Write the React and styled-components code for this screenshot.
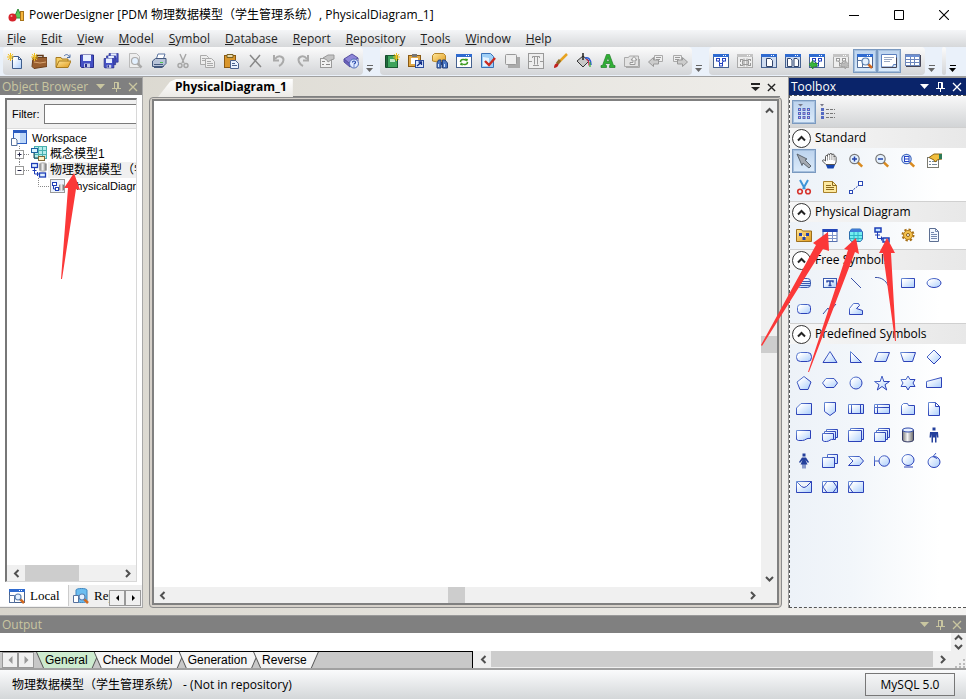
import React from "react";
import styled, { createGlobalStyle, css } from "styled-components";

const UI = '"Open Sans", "Noto Sans CJK SC", sans-serif';
const CLASSIC = '"Liberation Sans", "Noto Sans CJK SC", sans-serif';

const Global = createGlobalStyle`
  * { box-sizing: border-box; }
  body { margin: 0; background: #fff; }
  button, input { font: inherit; color: inherit; margin: 0; padding: 0; }
  button { background: none; border: 0; }
`;

/* ---------- icons ---------- */

const Svg = styled.svg`
  display: block;
  flex: none;
  width: ${(p) => p.$w || 16}px;
  height: ${(p) => p.$h || p.$w || 16}px;
`;

const Hidden = styled.svg`
  position: absolute;
  width: 0;
  height: 0;
`;

const Gradients = () => (
  <Hidden aria-hidden="true">
    <defs>
      <linearGradient id="sky" x1="0" y1="0" x2="1" y2="1">
        <stop offset="0.2" stopColor="#fff" />
        <stop offset="1" stopColor="#a9cdfc" />
      </linearGradient>
      <linearGradient id="ink" x1="0" y1="0" x2="1" y2="1">
        <stop offset="0" stopColor="#6f93d8" />
        <stop offset="0.5" stopColor="#2b41b8" />
      </linearGradient>
      <linearGradient id="gold" x1="0" y1="0" x2="1" y2="1">
        <stop offset="0" stopColor="#ffe79a" />
        <stop offset="1" stopColor="#e09a1c" />
      </linearGradient>
      <linearGradient id="steel" x1="0" x2="1">
        <stop offset="0" stopColor="#777" />
        <stop offset="0.45" stopColor="#f4f4f4" />
        <stop offset="1" stopColor="#666" />
      </linearGradient>
    </defs>
  </Hidden>
);

const Spark = () => (
  <path d="M3.500 0v8M0 4h7M1 1l5 6M6 1L1 7" stroke="#f2c01c" strokeWidth="1" fill="none" />
);
const Lens = ({ x = 7, y = 6, r = 3.5, rim = "#5b7fae", grip = "#d98a1f" }) => (
  <g>
    <path d={`M${x + r * 0.7} ${y + r * 0.7}L${x + r + 3} ${y + r + 3}`} stroke={grip} strokeWidth="2.500" />
    <circle cx={x} cy={y} r={r} fill="#e4f1ff" stroke={rim} strokeWidth="1.200" />
  </g>
);
const Win = ({ c = "#2f6bd0", b = "#46618f", f = "#fff" }) => (
  <g>
    <rect x="0.500" y="1.500" width="15" height="13" fill={f} stroke={b} />
    <path d="M0 1h16v3H0z" fill={c} />
    <path d="M10 2.500h4" stroke="#fff" strokeDasharray="1 1" />
  </g>
);
const Nodes = ({ c = "#2342c0" }) => (
  <g fill="#fff" stroke={c}>
    <path d="M5 7.500l3 4 3-4" fill="none" />
    <rect x="3.500" y="5.500" width="3" height="2.500" />
    <rect x="9.500" y="5.500" width="3" height="2.500" />
    <rect x="6.500" y="10.500" width="3" height="2.500" />
  </g>
);
const Floppy = ({ x = 0, y = 0, s = 1 }) => (
  <g transform={`translate(${x} ${y}) scale(${s})`}>
    <path d="M1.500 2h13v12.500h-12l-1-1z" fill="#4450c4" stroke="#2a2f8c" />
    <path d="M4 2h8v6H4z" fill="#e8f0ff" />
    <path d="M5 10.500h6v4H5z" fill="#c8cfe8" />
    <path d="M6 11h2v3H6z" fill="#2a2f8c" />
  </g>
);

const ICONS = {
  logo: (
    <g>
      <path d="M6 11L10 2l4 9z" fill="#5bc95b" stroke="#2f8a39" />
      <rect x="12.500" y="4.500" width="3" height="9" fill="#f5b63c" stroke="#a8741a" />
      <circle cx="4.500" cy="10.500" r="4" fill="#d6232a" />
      <circle cx="3.500" cy="9" r="1" fill="#f79a9a" />
    </g>
  ),
  newDoc: (
    <g>
      <path d="M5.500 3.500h6l3 3v9h-9z" fill="url(#sky)" stroke="#3f5d8c" />
      <path d="M11.500 3.500v3h3" fill="none" stroke="#3f5d8c" />
      <Spark />
    </g>
  ),
  briefcase: (
    <g>
      <path d="M6 5V2.500h6V5" fill="none" stroke="#5f3818" strokeWidth="1.500" />
      <path d="M2 4.500l14 0v9l-13 2-2-2z" fill="#9a5f30" stroke="#6b3e1a" />
      <path d="M3 9l6 1 6-1" stroke="#d9a673" fill="none" />
      <Spark />
    </g>
  ),
  open: (
    <g>
      <path d="M1 14V4.500h5l1 1.500h6v2" fill="#f4cd62" stroke="#a87a1e" />
      <path d="M1 14.500L4 8h12l-3 6.500z" fill="url(#gold)" stroke="#a87a1e" />
      <path d="M9 3c2-2 4-2 5.500 1M15 1.500v3h-3" fill="none" stroke="#4e6fa6" />
    </g>
  ),
  save: <Floppy />,
  saveAll: (
    <g>
      <Floppy x={5} y={-1} s={0.7} />
      <Floppy x={2.5} y={1.5} s={0.7} />
      <Floppy x={0} y={4} s={0.75} />
    </g>
  ),
  preview: (
    <g>
      <path d="M2.500.5h7l3 3v11h-10z" fill="#eee" stroke="#bbb" />
      <Lens x={8} y={8} rim="#aaa" grip="#aaa" />
    </g>
  ),
  print: (
    <g>
      <path d="M5 7l2-6h7l-2 6z" fill="#fff" stroke="#5b74a0" />
      <path d="M1.500 8l3-2.500h10.500v5l-3 3H1.500z" fill="#b7c3d8" stroke="#43587e" />
      <path d="M3 11.500h9M3 14.500h8l2-1.500" stroke="#43587e" fill="none" />
      <path d="M9 9.500h3" stroke="#4ec14e" />
    </g>
  ),
  cut: (
    <g fill="none" stroke="#a5a5a5" strokeWidth="1.400">
      <path d="M5 1l4 9M11 1L7 10" />
      <circle cx="5" cy="12.500" r="2" />
      <circle cx="11" cy="12.500" r="2" />
    </g>
  ),
  copy: (
    <g fill="#eee" stroke="#aaa">
      <path d="M1.500 2.500h6l2 2v7h-8z" />
      <path d="M6.500 5.500h6l3 3v6h-9z" />
      <path d="M8 8.500h4M8 10.500h6M8 12.500h6M3 5.500h3M3 7.500h3" />
    </g>
  ),
  paste: (
    <g>
      <rect x="1.500" y="2.500" width="11" height="12" fill="#d9962c" stroke="#8a5a14" />
      <path d="M4 1.500h6v3H4z" fill="#e7d9b0" stroke="#77601f" />
      <path d="M7.500 7.500h5l3 3v5h-8z" fill="#eaf3ff" stroke="#4c628c" />
      <path d="M9 10.500h3M9 12.500h5" stroke="#4c628c" />
    </g>
  ),
  del: <path d="M3 2l11 12M13 2L3 14" stroke="#888" strokeWidth="1.500" fill="none" />,
  undo: (
    <g fill="none" stroke="#aaa" strokeWidth="2">
      <path d="M4 6c4-5 10-2 8 3-1 2-2 3-4 4" />
      <path d="M3 2v5.500h5" />
    </g>
  ),
  redo: (
    <g fill="none" stroke="#aaa" strokeWidth="2">
      <path d="M12 6C8 1 2 4 4 9c1 2 2 3 4 4" />
      <path d="M13 2v5.500H8" />
    </g>
  ),
  props: (
    <g>
      <rect x="1.500" y="5.500" width="11" height="9" fill="#f1f1f1" stroke="#9a9a9a" />
      <path d="M3 8.500h3M3 11.500h2M7 11.500h4" stroke="#888" />
      <path d="M4 5l5-3h6v4l-3 1-3 2-1-2z" fill="#c4c4c4" stroke="#999" />
    </g>
  ),
  help: (
    <g>
      <path d="M1 6l8-5 6 4-8 6z" fill="#8e86d8" stroke="#5750a0" />
      <path d="M1 6v3l6 5V11z" fill="#6a62bd" stroke="#5750a0" />
      <path d="M7 11l8-6v3l-8 6z" fill="#fff" stroke="#5750a0" />
      <circle cx="11" cy="10.500" r="4.500" fill="#dfe9ff" stroke="#4b67b4" />
      <path d="M9.500 9.500c0-2 3-2 3 0 0 1-1.500 1-1.500 2M11 12.500v1" fill="none" stroke="#2344a8" strokeWidth="1.200" />
    </g>
  ),
  newModel: (
    <g>
      <path d="M1.500 2.500h3v12h-3z" fill="#1f6b3a" stroke="#144a28" />
      <rect x="3.500" y="2.500" width="10" height="12" fill="#3ea35b" stroke="#1b5a33" />
      <rect x="6" y="6" width="5" height="3" fill="#bfe8c8" />
      <path d="M12.500 0v8M9 4h7M10 1l5 6M15 1l-5 6" stroke="#f2c01c" />
    </g>
  ),
  pasteShortcut: (
    <g>
      <rect x="0.500" y="2.500" width="12" height="11" fill="#e0a848" stroke="#8a5a14" />
      <path d="M4 1h5v3H4z" fill="#777" />
      <path d="M3 5h7v6H3z" fill="#fff" />
      <rect x="7.500" y="7.500" width="8" height="7" fill="#dbe8ff" stroke="#2b4c9c" />
      <path d="M9 13l4-3.500M10.500 9h3v3" stroke="#112c86" fill="none" strokeWidth="1.300" />
    </g>
  ),
  find: (
    <g>
      <path d="M.5 2.500l2-2h9l2 2v6l-3 1.500-10-2z" fill="url(#gold)" stroke="#b5852a" />
      <path d="M5 15V10l1.500-3h2.500v8zM10.500 15V7H13l2.500 3v5z" fill="#4b78c4" stroke="#24407c" />
      <path d="M9 9h2v3H9z" fill="#24407c" />
      <path d="M6.500 11v3M12.500 11v3" stroke="#cfe2ff" />
    </g>
  ),
  refresh: (
    <g>
      <Win />
      <path d="M4.500 9c0-3 4-3 6-1.500M11.500 9c0 3-4 3-6 1.500" fill="none" stroke="#3c9a1e" strokeWidth="1.500" />
      <path d="M9 5.500l3 .5-1 3zM7 12.500l-3-.5 1-3z" fill="#3c9a1e" />
    </g>
  ),
  check: (
    <g>
      <path d="M1.500.5h9l3 3v11h-12z" fill="#9fd0f7" stroke="#3a72b8" />
      <path d="M3 4l6 1v8H3z" fill="#e3f3ff" />
      <path d="M5 8l4 4 6-7" fill="none" stroke="#c92b20" strokeWidth="2.400" />
    </g>
  ),
  shadow: (
    <g>
      <rect x="4" y="4" width="12" height="11" fill="#aaa" />
      <rect x="1.500" y="1.500" width="11" height="10" rx="1" fill="#eee" stroke="#999" />
    </g>
  ),
  fitText: (
    <g fill="none" stroke="#999">
      <rect x="0.500" y="0.500" width="15" height="15" fill="#eee" />
      <path d="M4.500 5V3.500h7V5M6.500 3.500v8M9.500 3.500v8M5 12.500h6M1 8.500h3M12 8.500h3" />
    </g>
  ),
  brush: (
    <g>
      <path d="M15 1L6 10" stroke="#e7a321" strokeWidth="2.500" />
      <path d="M8 7L5 11" stroke="#8c6a2a" strokeWidth="3" />
      <path d="M2 15c0-3 1-5 4-4.500C7 13 5 14.500 2 15z" fill="#c2201d" />
    </g>
  ),
  fill: (
    <g>
      <path d="M1 8l6-5 6 5-6 6z" fill="#c8c8c8" stroke="#333" />
      <path d="M7 0v7" stroke="#222" strokeWidth="1.500" />
      <path d="M9 5c3-1 6 1 6 7" fill="none" stroke="#2a59d6" strokeWidth="1.500" />
      <path d="M10 6.500c2 0 3 2 3 6" fill="none" stroke="#d62a4f" strokeWidth="1.200" />
      <path d="M14 9v5" stroke="#2fae35" strokeWidth="1.200" />
    </g>
  ),
  font: (
    <path
      d="M6.500 1.500h3l4 11H15v2H9.500v-2h1l-.7-2H5.700l-.6 2h1.400v2H1v-2h1.500zM6.500 8.500h2.800L8 4.500z"
      fill="#2fb135"
      stroke="#1f7d26"
      strokeWidth="0.700"
    />
  ),
  foldUp: (
    <g>
      <path d="M.5 13.500v-9h4l1-1.500h9v10.500z" fill="#e3e3e3" stroke="#aaa" />
      <path d="M6 11.500h5V7h2L10 3.500 7 7h2v2.500H6z" fill="#f4f4f4" stroke="#999" />
      <path d="M2 14.500h13.500V6" fill="none" stroke="#aaa" />
    </g>
  ),
  prev: (
    <g>
      <path d="M6.500 2.500h8v6h-8z" fill="#eee" stroke="#aaa" />
      <path d="M8 4.500h5M8 6.500h4" stroke="#999" />
      <path d="M.5 9l5-4.500V7h5v4h-5v2.500z" fill="#ccc" stroke="#999" />
    </g>
  ),
  next: (
    <g>
      <path d="M1.500 2.500h8v6h-8z" fill="#eee" stroke="#aaa" />
      <path d="M3 4.500h5M3 6.500h4" stroke="#999" />
      <path d="M15.500 9l-5-4.500V7h-5v4h5v2.500z" fill="#ccc" stroke="#999" />
    </g>
  ),
  diagram: (<g><Win /><Nodes /></g>),
  diagramOff: (
    <g>
      <Win c="#c4c4c4" b="#aaa" f="#eee" />
      <path d="M3 6.500h3M11 6.500h3M3 12.500h3M11 12.500h3M3.500 6v3M3.500 11v2M13.500 6v2M13.500 10v3" stroke="#999" />
      <path d="M5.500 7.500h6v4h-6zM7 5.500v8M10 5.500v8" fill="none" stroke="#999" />
    </g>
  ),
  page: (
    <g>
      <Win f="#cfdcf0" />
      <path d="M5.500 5.500h4l2 2v6h-6z" fill="#fff" stroke="#33456b" />
    </g>
  ),
  pages: (
    <g>
      <Win f="#cfdcf0" />
      <path d="M2.500 5.500h3l1.500 1.500v6.500H2.500zM9 5.500h3l1.500 1.500v6.500H9z" fill="#fff" stroke="#33456b" />
    </g>
  ),
  parent: (
    <g>
      <Win />
      <Nodes />
      <path d="M0 11.500l4-4V10h4v3.500H4V16z" fill="#38b53c" stroke="#1e7a22" strokeWidth="0.700" />
    </g>
  ),
  childOff: (
    <g>
      <Win c="#c4c4c4" b="#aaa" f="#eee" />
      <Nodes c="#999" />
      <path d="M16 11.500l-4-4V10H8v3.500h4V16z" fill="#bbb" stroke="#999" strokeWidth="0.700" />
    </g>
  ),
  browser: (
    <g>
      <Win />
      <path d="M.5 7.500h4l1 1.500v5.500h-5z" fill="#fff" stroke="#55709c" />
      <Lens x={8.5} y={8.5} grip="#d2691e" />
    </g>
  ),
  output: (
    <g>
      <path d="M.5 1.500h15v10h-3l-1 2.500h-11z" fill="#fff" stroke="#5a7fbf" />
      <path d="M3 4.500h10M3 6.500h8M3 8.500h6" stroke="#9aa9c4" />
      <path d="M.5 14.500h15v-10" fill="none" stroke="#445" />
    </g>
  ),
  results: (
    <g>
      <rect x="0.500" y="1.500" width="14" height="11" fill="#fff" stroke="#6f87b8" />
      <path d="M1 2h13v2H1z" fill="#6c8fd2" />
      <path d="M1 6.500h13M1 9.500h13M5.500 4v8M9.500 4v8" stroke="#6c86bd" />
      <path d="M1 13.500h14.500V2" stroke="#445" fill="none" />
    </g>
  ),
  gridView: (
    <g>
      <path d="M2 0h5L4.500 2.500z" fill="#778" />
      <path d="M2 5.500h12M2 9.500h12M2 13.500h12" stroke="#5369c2" strokeWidth="3" strokeDasharray="3 1.500" />
      <path d="M3 5.500h12M3 9.500h12M3 13.500h12" stroke="#f3a5c4" strokeDasharray="1 3.500" />
    </g>
  ),
  listView: (
    <g>
      <path d="M0 0h4L2 2.500z" fill="#778" />
      <path d="M2.500 4v11" stroke="#5369c2" strokeWidth="3" strokeDasharray="3 1" />
      <path d="M6 5.500h9M6 9.500h9M6 13.500h9" stroke="#777" strokeDasharray="3 1" />
    </g>
  ),
  pointer: (
    <path d="M1 1l10 5-2 1 6 6-2 2-6-5-1 2.500z" fill="#a4aab2" stroke="#555d66" strokeWidth="0.900" />
  ),
  hand: (
    <g>
      <path
        d="M4 11.500L.5 8c0-1.500 1.500-1.500 3 0V3.500c0-1.300 2-1.300 2 0V2c0-1.300 2.200-1.300 2.200 0V1.300c0-1.200 2.200-1.200 2.200 0V2c0-1.300 2.200-1.300 2.200 0v2c0-1.200 2-1.200 2 .3V9L13 11.500z"
        fill="#fff"
        stroke="#444"
        strokeWidth="0.900"
      />
      <path d="M5.500 3v4.500M7.700 2v5M9.900 2v5M12.100 3v4.500" stroke="#777" strokeWidth="0.700" />
      <path d="M4 12h9l-1.500 3.500h-6z" fill="#1746b0" />
    </g>
  ),
  zoomIn: (
    <g>
      <Lens x={6.5} y={6} r={4.7} rim="#777" />
      <path d="M6.500 3.500v5M4 6h5" stroke="#2444a8" strokeWidth="1.500" />
    </g>
  ),
  zoomOut: (
    <g>
      <Lens x={6.5} y={6} r={4.7} rim="#777" />
      <path d="M4 6h5" stroke="#2444a8" strokeWidth="1.500" />
    </g>
  ),
  zoomFit: (
    <g>
      <Lens x={6.5} y={6} r={4.7} rim="#4a6fc0" />
      <rect x="4.500" y="3.500" width="4.500" height="5" fill="#fff" stroke="#2444c8" />
      <path d="M5 6h4" stroke="#2444c8" />
    </g>
  ),
  propsHand: (
    <g>
      <rect x="1.500" y="4.500" width="11" height="10" fill="#fff" stroke="#7a7a70" />
      <path d="M3 8.500h2M6 8.500h5M3 11.500h2M6 11.500h5" stroke="#789" />
      <path d="M3 4.500L8 1h8v5l-4 .5-3 2.500-1-2z" fill="#f2bf3d" stroke="#8a6414" />
      <path d="M13 1h3v5h-3z" fill="#2e7a57" />
    </g>
  ),
  scissors: (
    <g fill="none">
      <path d="M4 1l5 9M12 1L7 10" stroke="#3f95d8" strokeWidth="2" />
      <circle cx="4" cy="12.500" r="2.300" stroke="#d6332c" strokeWidth="1.600" />
      <circle cx="12" cy="12.500" r="2.300" stroke="#d6332c" strokeWidth="1.600" />
    </g>
  ),
  note: (
    <g>
      <path d="M1.500 2.500h9l4 4v7h-13z" fill="#fde9a0" stroke="#a8812a" />
      <path d="M10.500 2.500v4h4M4 6.500h5M4 8.500h8M4 10.500h8" fill="none" stroke="#8c6a1d" />
    </g>
  ),
  link: (
    <g fill="#fff" stroke="#2b49b5">
      <rect x="1.500" y="11.500" width="3" height="3" />
      <rect x="10.500" y="2.500" width="4" height="4" />
      <path d="M5.500 10.500L10 7" strokeDasharray="2 1" />
    </g>
  ),
  package: (
    <g>
      <path d="M.5 14.500v-12h5l1 1.500h9v10.500z" fill="url(#gold)" stroke="#9c6f1c" />
      <path d="M5 7l3 4 4-4" stroke="#fff" fill="none" />
      <path d="M3 6h3v3H3zM10 6h3v3h-3zM6.500 10h3v3h-3z" fill="#2240ae" />
    </g>
  ),
  table: (
    <g>
      <rect x="1" y="2.500" width="14" height="12" fill="#fff" stroke="#5570b0" />
      <path d="M.5 2h15v3H.5z" fill="#2446b8" />
      <path d="M1 8.500h14M1 11.500h14M5.500 5v9M10.500 5v9" stroke="#7f95c9" />
    </g>
  ),
  view: (
    <g>
      <path d="M1.500 5l2-3h9l2 3v7l-2 2.500h-9l-2-2.500z" fill="#74eef2" stroke="#2e6fae" />
      <path d="M1.500 5l2-3h9l2 3z" fill="#3f7bd6" />
      <path d="M2 8.500h12M2 11.500h12M6 5v9M10 5v9" stroke="#2fb3c4" />
    </g>
  ),
  reference: (
    <g fill="#bfe3ff" stroke="#1d3db6">
      <path d="M3.500 5v6.500H9M1 8h5M7.500 9.500v4" fill="none" />
      <rect x="1" y="1" width="6" height="4" strokeWidth="1.500" />
      <rect x="9" y="11" width="6" height="4" strokeWidth="1.500" />
    </g>
  ),
  procedure: (
    <g>
      <circle cx="8" cy="8" r="5.500" fill="none" stroke="#a66f16" strokeWidth="2" strokeDasharray="2.300 2" />
      <circle cx="8" cy="8" r="4.500" fill="#f5c24d" stroke="#b57d1c" />
      <circle cx="8" cy="8" r="1.500" fill="#fff" stroke="#8a5c10" />
    </g>
  ),
  file: (
    <g>
      <path d="M3.500 1.500h6l3 3v10h-9z" fill="#f3f8ff" stroke="#5d6f92" />
      <path d="M9.500 1.500v3h3M5 5.500h3M5 7.500h6M5 9.500h6M5 11.500h6" fill="none" stroke="#7488b0" />
    </g>
  ),
  textBox: (
    <g>
      <rect x="1.500" y="3.500" width="13" height="9" fill="url(#sky)" stroke="#3a5bb0" />
      <path d="M5 7.500V6h6v1.500M8 6v4.500M6.500 10.500h3" stroke="#2a48a8" strokeWidth="1.500" fill="none" />
    </g>
  ),
  title: (
    <g>
      <rect x="1.500" y="3.500" width="13" height="9" rx="3" fill="url(#sky)" stroke="#3a5bb0" />
      <path d="M2 6.500h12M2 8.500h12M2 10.500h12" stroke="#3a5bb0" />
    </g>
  ),
  cylinder: (
    <g>
      <path d="M2.500 3v10c0 2.500 11 2.500 11 0V3z" fill="url(#steel)" stroke="#333a66" />
      <ellipse cx="8" cy="3" rx="5.500" ry="2" fill="#e8f1ff" stroke="#2f49a8" />
    </g>
  ),
  man: (
    <path d="M6.500.5h3v3h-3zM4 5h8l.5 5.500h-1.500L10.500 7v8.500H9v-5H7v5H5.500V7L5 10.500H3.500z" fill="#24409c" />
  ),
  woman: (
    <path d="M6.500.5h3v3h-3zM6 4.500h4l3 4.500-1 1-2.500-3 2 4.500H9.500v4H8.500v-4h-1v4H6.500v-4H4.500l2-4.500L4 10 3 9z" fill="#24409c" />
  ),
  localTab: (
    <g>
      <Win />
      <path d="M.5 7.500h5v7h-5z" fill="#fff" stroke="#55709c" />
      <Lens x={9} y={9} r={3} grip="#d2691e" />
    </g>
  ),
  repoTab: (
    <g>
      <path d="M3 2c0-2 11-2 11 0v11c0 2-11 2-11 0z" fill="#6bbdf0" stroke="#3f86c0" />
      <path d="M.5 7.500h5v7h-5z" fill="#fff" stroke="#55709c" />
      <Lens x={9} y={9} r={3} grip="#d2691e" />
    </g>
  ),
  workspace: (
    <g>
      <rect x="2.500" y="0.500" width="13" height="13" fill="#eaf3ff" stroke="#2b5cc0" />
      <path d="M2 0h14v3H2z" fill="#2b5cc0" />
      <path d="M9 3h6v10H9z" fill="#bcd6f8" />
      <path d="M.5 8.500h4l1.500 1.500v5.500H.5z" fill="#fff" stroke="#55709c" />
    </g>
  ),
  cdm: (
    <g>
      <rect x="3.500" y="0.500" width="12" height="12" fill="#b4ecea" stroke="#48b0ae" />
      <path d="M4 4.500h11M4 8.500h11M7.500 1v11M11.500 1v11" stroke="#48b0ae" />
      <path d="M3 6v6h4" fill="none" stroke="#245" />
      <rect x="0.500" y="2.500" width="6" height="4" fill="#d9f4ff" stroke="#1b64a0" />
      <rect x="7.500" y="10.500" width="6" height="4" fill="#fff1c4" stroke="#7d6a3a" />
    </g>
  ),
  pdm: (
    <g>
      <path d="M8.500 2c0-1.500 7-1.500 7 0v6c0 1.500-7 1.500-7 0z" fill="url(#steel)" stroke="#aaa" />
      <path d="M3.500 5v7h5M1.500 8.500h4M6.500 10v4" fill="none" stroke="#1d3db6" />
      <rect x="0.500" y="1.500" width="6" height="4" fill="#e0f0ff" stroke="#1d3db6" strokeWidth="1.300" />
      <rect x="8.500" y="11" width="6" height="4" fill="#e0f0ff" stroke="#1d3db6" strokeWidth="1.300" />
    </g>
  ),
  pdmDiagram: (
    <g>
      <rect x="0.500" y="1.500" width="14" height="13" fill="#eaf2fd" stroke="#999" />
      <path d="M9 7c0-1 5-1 5 0v5c0 1-5 1-5 0z" fill="url(#steel)" />
      <path d="M3.500 7v4h3" fill="none" stroke="#1d3db6" />
      <rect x="2.500" y="4.500" width="4" height="3" fill="#fff" stroke="#1d3db6" />
      <rect x="5.500" y="9.500" width="3" height="3" fill="#fff" stroke="#1d3db6" />
    </g>
  ),
};

/* open strokes with no fill */
const STROKES = {
  line: "M3 3l10 10",
  arc: "M1 2.500c6-.5 11 3 13 8",
  polyline: "M1 13l5-6 2 3 6-7",
};

/* outline symbols sharing one stroke and fill */
const OUTLINES = {
  rectangle: "M1.500 3.500h13v9h-13z",
  ellipse: "M1 8a7 4.500 0 1 0 14 0a7 4.500 0 1 0-14 0z",
  rounded: "M4.500 3.500h7a3 3 0 0 1 3 3v3a3 3 0 0 1-3 3h-7a3 3 0 0 1-3-3v-3a3 3 0 0 1 3-3z",
  polygon: "M1.500 13.500v-6l4-5h5l1 2-3 3 6 2v4z",
  capsule: "M4.500 3.500h7a4 4 0 0 1 4 4v1a4 4 0 0 1-4 4h-7a4 4 0 0 1-4-4v-1a4 4 0 0 1 4-4z",
  triangle: "M8 2.500l7 11H1z",
  rightTriangle: "M2.500 2.500v11h11z",
  parallelogram: "M4 3.500h11.500l-3.500 9H.5z",
  trapezoid: "M.5 3.500h15l-3 9h-9z",
  diamond: "M8 1L15 8 8 15 1 8z",
  pentagon: "M8 1.500l7 5.500-3 7.500H4L1 7z",
  hexagon: "M4 3.500h8L15.500 8 12 12.500H4L.5 8z",
  circle: "M2 8a6 6 0 1 0 12 0a6 6 0 1 0-12 0z",
  star5: "M8 1l1.800 5.500h5.700l-4.500 3.200 1.700 5.300L8 11.500 3.300 15l1.700-5.300L.5 6.500h5.700z",
  star6: "M8 1l2 3.500h5L13 8l2 3.500h-5L8 15l-2-3.500H1L3 8 1 4.500h5z",
  slope: "M.5 6.500l15-4v10H.5z",
  snip: "M5 2.500h10.500v11H.5V7z",
  shield: "M2.500 1.500h11v9L8 14.500l-5.500-4z",
  process: "M.5 3.500h15v9H.5zM3.500 3.500v9M12.500 3.500v9",
  storage: "M.5 3.500h15v9H.5zM.5 6.500h15M3.500 3.500v9",
  folder: "M1.500 13.500v-9l2-2h4l1 2h6v9z",
  docFold: "M2.500 1.500h7l4 4v9h-11zM9.500 1.500v4h4",
  document: "M.5 3.500h14v8c-4-1-5 2-8 2h-4l-2-1z",
  documents: "M4.500 4.500v-2h11v8h-2M2.500 6.500v-2h11v8h-2M.5 6.500h11v6c-3-1-4 2-7 2h-2l-2-1z",
  boxes2: "M2.500 3.500v-2h13v11h-2M.5 3.500h13v11H.5z",
  boxes3: "M4.500 3.500v-2h11v9h-2M2.500 5.500v-2h11v9h-2M.5 5.500h11v9H.5z",
  windows: "M5.500 4.500v-3h10v9h-3M.5 4.500h12v10H.5z",
  chevron: "M.5 3.500h11l4 4.500-4 4.500H.5L5 8z",
  boundary: "M.5 3v10M.5 8H5M5 8a5 5 0 1 0 10.500 0a5 5 0 1 0-10.500 0z",
  entity: "M2 7a6 5.500 0 1 0 12 0a6 5.500 0 1 0-12 0zM4 14h9",
  control: "M2 9a6 5.500 0 1 0 12 0a6 5.500 0 1 0-12 0zM10 0L7 3.500l4 2",
  envelope: "M.5 2.500h15v11H.5zM.5 2.500l5 5 2.500 1 2.500-1 5-5",
  octagonBox: "M.5 2.500h15v11H.5zM5 2.500L1 8l4 5.500M11 2.500L15 8l-4 5.500",
  arrowBox: "M.5 2.500h15v11H.5zM5 2.500L1 8l4 5.500",
};

const drawing = (name) => {
  if (ICONS[name]) return ICONS[name];
  if (STROKES[name]) return <path d={STROKES[name]} fill="none" stroke="#3a51a8" />;
  return <path d={OUTLINES[name]} fill="url(#sky)" stroke="url(#ink)" />;
};

const Icon = ({ name, size }) => (
  <Svg viewBox="0 0 16 16" $w={size} aria-hidden="true">{drawing(name)}</Svg>
);

const CHEVRONS = {
  left: "M6.500 1L3 4.500 6.500 8",
  right: "M3 1l3.500 3.500L3 8",
  up: "M1 6.500L4.500 3 8 6.500",
  down: "M1 3l3.500 3.500L8 3",
};
const Chevron = ({ dir, color = "#505050" }) => (
  <Svg viewBox="0 0 9 9" $w={9} aria-hidden="true">
    <path d={CHEVRONS[dir]} fill="none" stroke={color} strokeWidth="2" />
  </Svg>
);

const Caret = ({ w = 9, h = 5 }) => (
  <Svg viewBox="0 0 9 5" $w={w} $h={h} aria-hidden="true">
    <path d="M0 0h9L4.500 5z" fill="currentColor" />
  </Svg>
);

/* ---------- shell ---------- */

const Shell = styled.div`
  display: flex;
  flex-direction: column;
  height: 100vh;
  overflow: hidden;
  font: 12px/16px ${UI};
  color: #000;
  background: linear-gradient(90deg, #d8d5cc, #f4f3f1);
`;

const TitleBar = styled.header`
  display: flex;
  align-items: center;
  flex: none;
  height: 30px;
  padding-left: 8px;
  gap: 5px;
  background: #fff;
  white-space: nowrap;
`;
const Title = styled.h1`
  flex: 1;
  margin: 0;
  font: inherit;
`;
const WindowButton = styled.button`
  display: grid;
  place-items: center;
  width: 45px;
  height: 30px;
`;

const MenuBar = styled.nav`
  display: flex;
  flex: none;
  height: 17px;
  padding-left: 7px;
  gap: 15px;
  background: linear-gradient(#f5f6f8, #d6d8da);
`;
const MenuItem = styled.button`
  line-height: 17px;
  color: #222;
  white-space: nowrap;
  &::first-letter { text-decoration: underline; }
`;

const Toolbar = styled.div`
  display: flex;
  flex: none;
  height: 30px;
  padding-left: 3px;
  gap: 4px;
  background: #eaf1fa;
  border-bottom: 1px solid #a0a0a0;
`;
const Group = styled.div`
  display: flex;
`;
const Band = styled.div`
  display: flex;
  align-items: center;
  height: 28px;
  min-width: 4px;
  border-radius: 4px;
  background: linear-gradient(#fbfbfb, #d3d5d8);
`;
const ToolButton = styled.button`
  display: grid;
  place-items: center;
  width: 24px;
  height: 24px;
  border: 1px solid transparent;
  ${(p) =>
    p.$on &&
    css`
      background: linear-gradient(#bcd3ee, #dcebfa);
      border-color: #7b9ac0;
      box-shadow: inset 0 0 0 1px #a5bfdd;
    `}
`;
const More = styled.button`
  display: flex;
  flex-direction: column;
  justify-content: flex-end;
  align-items: center;
  gap: 2px;
  width: 13px;
  height: 28px;
  padding-bottom: 3px;
  color: ${(p) => (p.$dark ? "#000" : "#666")};
  &::before {
    content: "";
    width: 6px;
    height: 1px;
    background: currentColor;
  }
`;

/* ---------- panels ---------- */

const Workspace = styled.main`
  display: flex;
  flex: 1;
  min-height: 0;
  padding-bottom: 7px;
`;
const Caption = styled.header`
  display: flex;
  align-items: center;
  flex: none;
  height: 17px;
  padding: 0 4px 0 2px;
  gap: 5px;
  color: ${(p) => (p.$active ? "#fff" : "#c9c6a0")};
  background: ${(p) => (p.$active ? "#0a246a" : "#808080")};
`;
const CaptionText = styled.h2`
  flex: 1;
  margin: 0;
  font: 12px/17px ${UI};
  white-space: nowrap;
`;
const CaptionButton = styled.button`
  display: grid;
  place-items: center;
  width: 11px;
  height: 16px;
`;

const CaptionBar = ({ title, active }) => (
  <Caption $active={active}>
    <CaptionText>{title}</CaptionText>
    <CaptionButton aria-label="Panel menu"><Caret /></CaptionButton>
    <CaptionButton aria-label="Pin">
      <Svg viewBox="0 0 9 10" $w={9} $h={10} aria-hidden="true">
        <path d="M2.500 0v6M2.500.5h4V6M5.500 0v6M0 6.500h9M4.500 7v3" fill="none" stroke="currentColor" />
      </Svg>
    </CaptionButton>
    <CaptionButton aria-label="Close panel">
      <Svg viewBox="0 0 10 10" $w={10} aria-hidden="true">
        <path d="M1 1l8 8M9 1L1 9" stroke="currentColor" strokeWidth="1.300" />
      </Svg>
    </CaptionButton>
  </Caption>
);

const Browser = styled.section`
  position: relative;
  display: flex;
  flex-direction: column;
  flex: none;
  width: 143px;
  border: 1px solid #a8a8a8;
  border-left-width: 0;
  background: #fff;
`;
const BrowserBox = styled.div`
  display: flex;
  flex-direction: column;
  flex: 1;
  min-height: 0;
  margin: 3px 5px 3px 5px;
  border: 1px solid #d8d8d8;
  border-top: 2px solid #777;
  border-left: 2px solid #777;
`;
const Filter = styled.label`
  display: flex;
  align-items: center;
  flex: none;
  height: 28px;
  padding-left: 5px;
  gap: 4px;
  background: #f0f0f0;
  font: 11px/16px ${CLASSIC};
`;
const FilterInput = styled.input`
  flex: 1;
  min-width: 0;
  height: 20px;
  border: 1px solid #7a7a7a;
  border-right: 0;
  background: #fff;
`;
const Tree = styled.ul`
  flex: 1;
  min-height: 0;
  margin: 0;
  padding: 1px 0 0 4px;
  overflow: hidden;
  list-style: none;
  font: 11px/16px ${CLASSIC};
  border-top: 1px solid #ddd;
`;
const TreeRow = styled.li`
  display: flex;
  align-items: center;
  height: 16px;
  padding-left: ${(p) => p.$indent}px;
  gap: ${(p) => p.$gap || 1}px;
  white-space: nowrap;
`;
const TreeText = styled.span`
  padding: 0 2px;
  font-size: ${(p) => (p.$cjk ? 12 : 11)}px;
  background: ${(p) => (p.$selected ? "#f0f0f0" : "none")};
`;
const Expander = ({ open }) => (
  <Svg viewBox="0 0 15 16" $w={15} $h={16} aria-hidden="true">
    <path d={open ? "M9 8.500h6M4.500 0v4" : "M9 8.500h6M4.500 0v4M4.500 13v3"} stroke="#888" strokeDasharray="1 1" />
    <rect x="0.500" y="4.500" width="8" height="8" fill="#fff" stroke="#999" />
    <path d={open ? "M2.500 8.500h4" : "M2.500 8.500h4M4.500 6.500v4"} stroke="#224" />
  </Svg>
);

const HScroll = styled.div`
  display: flex;
  align-items: center;
  flex: ${(p) => (p.$grow ? 1 : "none")};
  height: 16px;
  background: #f0f0f0;
`;
const ScrollEnd = styled.button`
  display: grid;
  place-items: center;
  flex: none;
  width: ${(p) => p.$w || 16}px;
  height: ${(p) => p.$h || 16}px;
`;
const Track = styled.div`
  display: flex;
  flex: 1;
  align-self: stretch;
  flex-direction: ${(p) => (p.$vertical ? "column" : "row")};
`;
const Space = styled.div`
  flex: 1;
`;
const Thumb = styled.div`
  flex: ${(p) => (p.$size ? `0 0 ${p.$size}px` : 1)};
  background: #cdcdcd;
`;

const BrowserTabs = styled.div`
  display: flex;
  flex: none;
  height: 22px;
  padding-bottom: 1px;
  font: 13px/20px "Liberation Serif", serif;
  background: #f0f0f0;
`;
const BrowserTab = styled.button`
  display: flex;
  align-items: center;
  flex: none;
  width: ${(p) => p.$w}px;
  padding-left: ${(p) => (p.$on ? 9 : 4)}px;
  gap: 5px;
  overflow: hidden;
  background: ${(p) => (p.$on ? "#fff" : "#f0f0f0")};
  border-right: ${(p) => (p.$on ? "1px solid #ccc" : 0)};
`;
const StepButton = styled.button`
  display: grid;
  place-items: center;
  flex: none;
  width: 16px;
  height: 16px;
  align-self: flex-end;
  background: #f0f0f0;
  border: 1px solid #999;
`;
const Tri = ({ dir, color = "#000", s = 5 }) => (
  <Svg viewBox="0 0 5 6" $w={s} $h={s + 1} aria-hidden="true">
    <path d={dir === "left" ? "M4 0v6L1 3z" : "M1 0v6l3-3z"} fill={color} />
  </Svg>
);

/* ---------- document ---------- */

const Doc = styled.section`
  display: flex;
  flex-direction: column;
  flex: 1;
  min-width: 0;
  margin: 0 6px;
`;
const DocTabs = styled.div`
  display: flex;
  flex: none;
  height: 20px;
  padding: 2px 2px 0 9px;
`;
const DocTab = styled.button`
  flex: none;
  padding: 0 6px 3px 17px;
  font: bold 12px/15px ${UI};
  background: linear-gradient(#fff, #eceae6);
  clip-path: polygon(0 100%, 12px 15%, 18px 0, 100% 0, 100% 100%);
`;
const DocTools = styled.div`
  display: flex;
  flex: 1;
  justify-content: flex-end;
  padding-right: 3px;
  gap: 5px;
  border-bottom: 1px solid #808080;
`;
const Frame = styled.div`
  display: flex;
  flex: 1;
  min-height: 0;
  padding: 1px 2px 2px;
  border: 1px solid #8c8c8c;
  border-radius: 4px;
  background: #d6d1ca;
`;
const Canvas = styled.div`
  display: grid;
  flex: 1;
  grid-template: 1fr 16px / 1fr 16px;
  border: 2px solid #808080;
  background: #f0f0f0;
`;
const Sheet = styled.div`
  background: #fff;
`;
const VScroll = styled.div`
  display: flex;
  flex-direction: column;
  background: #f0f0f0;
`;

/* ---------- toolbox ---------- */

const Toolbox = styled.aside`
  position: relative;
  display: flex;
  flex-direction: column;
  flex: none;
  width: 178px;
  border-left: 1px solid #999;
  border-top: 1px solid #999;
`;
const ToolboxBody = styled.div`
  flex: 1;
  min-height: 0;
  border: 1px dashed #555;
  border-right: 0;
  background: linear-gradient(90deg, #edf2f8, #f2f6fa 35%, #fff 85%);
`;
const ViewBar = styled.div`
  display: flex;
  align-items: center;
  height: 31px;
  padding: 0 2px;
  background: linear-gradient(#f8f8f8, #d2d4d6);
`;
const SectionHead = styled.button`
  display: flex;
  align-items: center;
  width: 100%;
  height: 21px;
  padding-left: 2px;
  gap: 4px;
  font: 12px/20px ${UI};
  text-align: left;
  border-top: 1px solid #d0d0d0;
  background: linear-gradient(90deg, #f6f6f6, #e8e8e8);
`;
const Round = styled.span`
  display: grid;
  place-items: center;
  flex: none;
  width: 19px;
  height: 19px;
  border: 1px solid #333;
  border-radius: 50%;
  background: #fff;
`;
const Palette = styled.div`
  display: grid;
  grid-template-columns: repeat(6, 26px);
  grid-auto-rows: 26px;
  padding: 0 0 1px 1px;
`;
const PaletteButton = styled(ToolButton)`
  align-self: center;
  justify-self: center;
`;

/* ---------- output & status ---------- */

const Output = styled.section`
  flex: none;
  border-top: 1px solid #999;
  border-bottom: 2px solid #a0a0a0;
  background: #fff;
`;
const OutputBody = styled.div`
  display: flex;
  justify-content: flex-end;
  height: 18px;
`;
const OutputScroll = styled.div`
  display: flex;
  flex-direction: column;
  justify-content: flex-end;
  width: 15px;
  background: #f0f0f0;
`;
const OutputFoot = styled.div`
  display: flex;
  height: 17px;
  background: #f0f0f0;
`;
const OutputTabs = styled.div`
  display: flex;
  flex: none;
  width: 49%;
  min-width: 340px;
  padding-left: 2px;
  margin-right: 3px;
  border-top: 1px solid #000;
  border-right: 1px solid #000;
  background: #c8c8c8;
  font: 12px/16px ${CLASSIC};
`;
const OutputTab = styled.button`
  flex: none;
  margin-left: ${(p) => (p.$first ? 2 : -6)}px;
  padding: 0 12px 0 9px;
  background: #555;
  clip-path: polygon(0 0, 100% 0, calc(100% - 7px) 100%, 7px 100%);
`;
const OutputTabFace = styled.span`
  display: block;
  margin: 0 -11px 0 -8px;
  padding: 0 11px 0 8px;
  background: ${(p) => (p.$on ? "#cdebcf" : "#f4f4f4")};
  clip-path: polygon(0 0, 100% 0, calc(100% - 7px) 100%, 7px 100%);
`;
const Status = styled.footer`
  display: flex;
  align-items: center;
  flex: none;
  height: 29px;
  padding: 0 11px 0 12px;
  background: linear-gradient(#fafbfc, #d4d7d9);
`;
const StatusText = styled.span`
  flex: 1;
`;
const Server = styled.button`
  width: 90px;
  height: 23px;
  border: 1px solid #777;
  background: linear-gradient(#f4f5f6, #dfe1e3);
`;

const Marks = styled.svg`
  position: absolute;
  top: 0;
  ${(p) => (p.$right ? "right: 0;" : "left: 0;")}
  width: ${(p) => p.$w}px;
  height: 310px;
  fill: #fb3838;
  pointer-events: none;
  z-index: 2;
`;

const MENUS = ["File", "Edit", "View", "Model", "Symbol", "Database", "Report", "Repository", "Tools", "Window", "Help"];

const BANDS = [
  ["newDoc", "briefcase", "open", "save", "saveAll", "preview", "print", "cut", "copy", "paste", "del", "undo", "redo", "props", "help"],
  ["newModel", "pasteShortcut", "find", "refresh", "check", "shadow", "fitText", "brush", "fill", "font", "foldUp", "prev", "next"],
  ["diagram", "diagramOff", "page", "pages", "parent", "childOff", "browser", "output", "results"],
  [],
];
const PRESSED = ["browser", "output", "pointer"];

const SECTIONS = [
  ["Standard", ["pointer", "hand", "zoomIn", "zoomOut", "zoomFit", "propsHand", "scissors", "note", "link"]],
  ["Physical Diagram", ["package", "table", "view", "reference", "procedure", "file"]],
  ["Free Symbols", ["title", "textBox", "line", "arc", "rectangle", "ellipse", "rounded", "polyline", "polygon"]],
  [
    "Predefined Symbols",
    [
      "capsule", "triangle", "rightTriangle", "parallelogram", "trapezoid", "diamond",
      "pentagon", "hexagon", "circle", "star5", "star6", "slope",
      "snip", "shield", "process", "storage", "folder", "docFold",
      "document", "documents", "boxes2", "boxes3", "cylinder", "man",
      "woman", "windows", "chevron", "boundary", "entity", "control",
      "envelope", "octagonBox", "arrowBox",
    ],
  ],
];

const OUTPUT_TABS = ["General", "Check Model", "Generation", "Reverse"];

export default function App() {
  return (
    <Shell>
      <Global />
      <Gradients />
      <TitleBar>
        <Icon name="logo" />
        <Title>PowerDesigner [PDM 物理数据模型（学生管理系统）, PhysicalDiagram_1]</Title>
        <Group>
          <WindowButton aria-label="Minimize">
            <Svg viewBox="0 0 10 10" $w={10}><path d="M0 5.500h10" stroke="#000" /></Svg>
          </WindowButton>
          <WindowButton aria-label="Maximize">
            <Svg viewBox="0 0 10 10" $w={10}><path d="M.5.5h9v9h-9z" fill="none" stroke="#000" /></Svg>
          </WindowButton>
          <WindowButton aria-label="Close">
            <Svg viewBox="0 0 10 10" $w={10}><path d="M0 0l10 10M10 0L0 10" stroke="#000" strokeWidth="1.100" /></Svg>
          </WindowButton>
        </Group>
      </TitleBar>

      <MenuBar>
        {MENUS.map((m) => <MenuItem key={m}>{m}</MenuItem>)}
      </MenuBar>

      <Toolbar>
        {BANDS.map((names, i) => (
          <Group key={i}>
            <Band>
              {names.map((n) => (
                <ToolButton key={n} $on={PRESSED.includes(n)} aria-label={n}><Icon name={n} /></ToolButton>
              ))}
            </Band>
            <More $dark={i === 3} aria-label="More buttons"><Caret w={7} h={4} /></More>
          </Group>
        ))}
      </Toolbar>

      <Workspace>
        <Browser>
          <CaptionBar title="Object Browser" />
          <BrowserBox>
            <Filter>Filter: <FilterInput type="text" /></Filter>
            <Tree>
              <TreeRow $indent={0} $gap={3}><Icon name="workspace" /><TreeText>Workspace</TreeText></TreeRow>
              <TreeRow $indent={4}><Expander /><Icon name="cdm" /><TreeText $cjk>概念模型1</TreeText></TreeRow>
              <TreeRow $indent={4}><Expander open /><Icon name="pdm" /><TreeText $cjk $selected>物理数据模型（学生管理系统）</TreeText></TreeRow>
              <TreeRow $indent={27}>
                <Svg viewBox="0 0 11 16" $w={11} $h={16} aria-hidden="true">
                  <path d="M.5 0v8.500H11" fill="none" stroke="#888" strokeDasharray="1 1" />
                </Svg>
                <Icon name="pdmDiagram" />
                <TreeText>PhysicalDiagram_1</TreeText>
              </TreeRow>
            </Tree>
            <HScroll>
              <ScrollEnd $w={18} aria-label="Scroll left"><Chevron dir="left" /></ScrollEnd>
              <Track><Thumb $size={54} /></Track>
              <ScrollEnd $w={18} aria-label="Scroll right"><Chevron dir="right" /></ScrollEnd>
            </HScroll>
          </BrowserBox>
          <BrowserTabs>
            <BrowserTab $on $w={69}><Icon name="localTab" />Local</BrowserTab>
            <BrowserTab $w={40}><Icon name="repoTab" />Repository</BrowserTab>
            <StepButton aria-label="Previous tab"><Tri dir="left" /></StepButton>
            <StepButton aria-label="Next tab"><Tri dir="right" /></StepButton>
          </BrowserTabs>
          <Marks $w={100} viewBox="0 78 100 310" aria-hidden="true">
            <path d="M74 173L64 188l4 0L61 279h1L76 189l4 1z" />
          </Marks>
        </Browser>

        <Doc>
          <DocTabs>
            <DocTab>PhysicalDiagram_1</DocTab>
            <DocTools>
              <CaptionButton aria-label="Window list">
                <Svg viewBox="0 0 9 8" $w={9} $h={8}>
                  <path d="M0 1h9" stroke="#222" strokeWidth="2" />
                  <path d="M0 4h9L4.500 8z" fill="#222" />
                </Svg>
              </CaptionButton>
              <CaptionButton aria-label="Close diagram">
                <Svg viewBox="0 0 10 10" $w={9}><path d="M1 1l8 8M9 1L1 9" stroke="#222" strokeWidth="1.500" /></Svg>
              </CaptionButton>
            </DocTools>
          </DocTabs>
          <Frame>
            <Canvas>
              <Sheet />
              <VScroll>
                <ScrollEnd $h={18} aria-label="Scroll up"><Chevron dir="up" /></ScrollEnd>
                <Track $vertical><Space /><Thumb $size={17} /><Space /></Track>
                <ScrollEnd $h={18} aria-label="Scroll down"><Chevron dir="down" /></ScrollEnd>
              </VScroll>
              <HScroll>
                <ScrollEnd aria-label="Scroll left"><Chevron dir="left" /></ScrollEnd>
                <Track><Space /><Thumb $size={17} /><Space /></Track>
                <ScrollEnd $w={18} aria-label="Scroll right"><Chevron dir="right" /></ScrollEnd>
              </HScroll>
            </Canvas>
          </Frame>
        </Doc>

        <Toolbox>
          <CaptionBar title="Toolbox" active />
          <ToolboxBody>
            <ViewBar>
              <ToolButton $on aria-label="Icon view"><Icon name="gridView" /></ToolButton>
              <ToolButton aria-label="List view"><Icon name="listView" /></ToolButton>
            </ViewBar>
            {SECTIONS.map(([label, names]) => (
              <React.Fragment key={label}>
                <SectionHead>
                  <Round><Chevron dir="up" color="#222" /></Round>
                  {label}
                </SectionHead>
                <Palette>
                  {names.map((n) => (
                    <PaletteButton key={n} $on={PRESSED.includes(n)} aria-label={n}><Icon name={n} /></PaletteButton>
                  ))}
                </Palette>
              </React.Fragment>
            ))}
          </ToolboxBody>
          <Marks $right $w={216} viewBox="750 78 216 310" aria-hidden="true">
            <path d="M828 232L813 243l3 2L761 345l1 1 61-97 6 2z" />
            <path d="M856 238L844 249l4 1L808 372h1l46-120 4 2z" />
            <path d="M887 238L879 253h4l12 88h1l-5-88h4z" />
          </Marks>
        </Toolbox>
      </Workspace>

      <Output>
        <CaptionBar title="Output" />
        <OutputBody>
          <OutputScroll>
            <ScrollEnd $w={15} $h={9} aria-label="Scroll up"><Chevron dir="up" /></ScrollEnd>
            <ScrollEnd $w={15} $h={9} aria-label="Scroll down"><Chevron dir="down" /></ScrollEnd>
          </OutputScroll>
        </OutputBody>
        <OutputFoot>
          <OutputTabs>
            <StepButton aria-label="Previous tab"><Tri dir="left" color="#999" s={7} /></StepButton>
            <StepButton aria-label="Next tab"><Tri dir="right" color="#999" s={7} /></StepButton>
            {OUTPUT_TABS.map((t, i) => (
              <OutputTab key={t} $first={i === 0}>
                <OutputTabFace $on={i === 0}>{t}</OutputTabFace>
              </OutputTab>
            ))}
          </OutputTabs>
          <HScroll $grow>
            <ScrollEnd $w={15} aria-label="Scroll left"><Chevron dir="left" /></ScrollEnd>
            <Track><Thumb /></Track>
            <ScrollEnd $w={18} aria-label="Scroll right"><Chevron dir="right" /></ScrollEnd>
          </HScroll>
          <Svg viewBox="0 0 15 17" $w={15} $h={17} aria-hidden="true">
            <path d="M12 8h2v2h-2zM12 12h2v2h-2zM8 12h2v2H8zM4 15h2v2H4zM8 15h2v2H8zM12 15h2v2h-2z" fill="#bbb" />
          </Svg>
        </OutputFoot>
      </Output>

      <Status>
        <StatusText>物理数据模型（学生管理系统） - (Not in repository)</StatusText>
        <Server>MySQL 5.0</Server>
      </Status>
    </Shell>
  );
}
